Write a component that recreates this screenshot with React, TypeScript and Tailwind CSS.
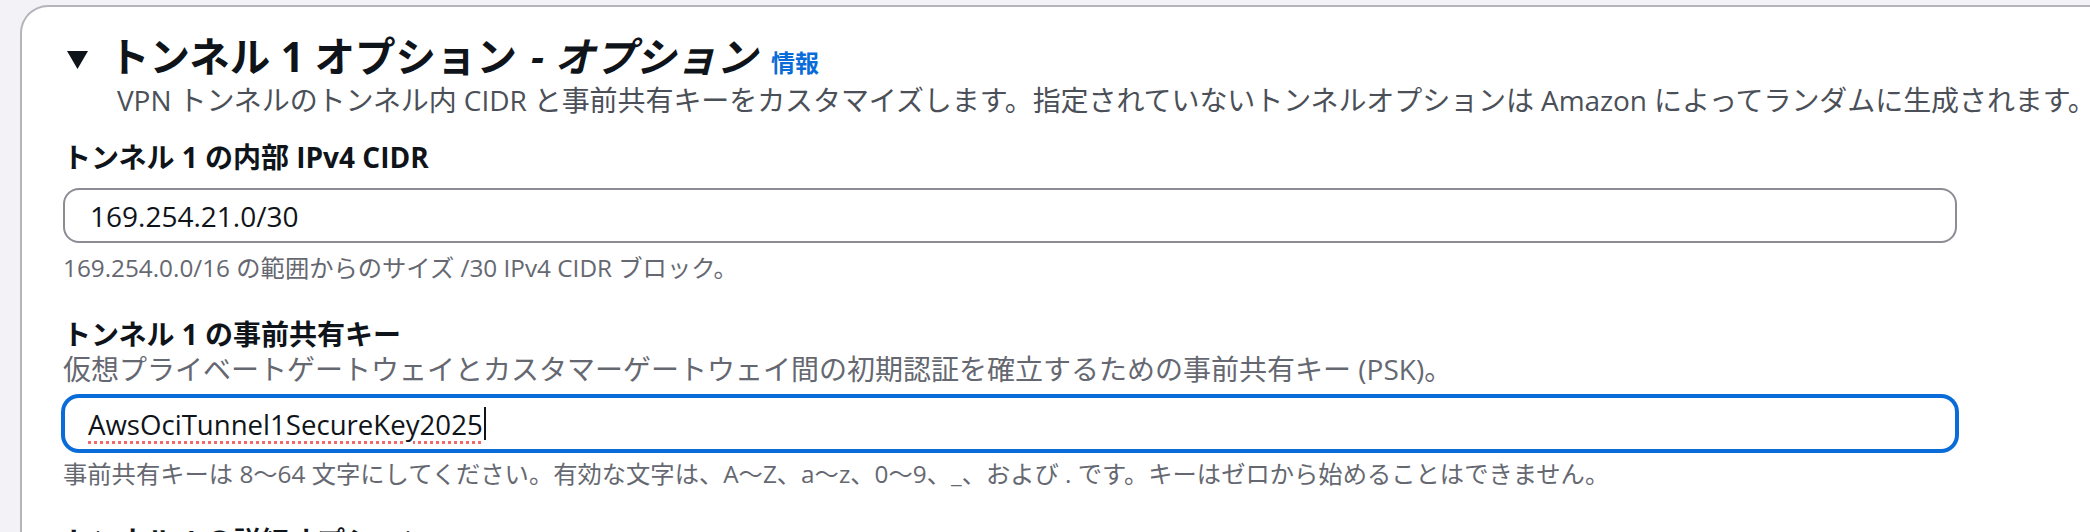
import React from "react";

const Caret = () => (
  <svg viewBox="0 0 21 18" className="ml-[4px] mr-[21px] h-[18px] w-[21px] shrink-0">
    <path d="M0 0h21L10.5 18z" fill="#0f141a" />
  </svg>
);

export default function App() {
  return (
    <div className="h-[532px] overflow-hidden bg-[#f3f3f7] pl-[20px] pt-[5px] font-['Open_Sans','Noto_Sans_CJK_JP',sans-serif]">
      <div className="h-[600px] rounded-tl-[28px] border-l-2 border-t-2 border-[#b4b4bb] bg-white pl-[41px] pt-[33px] text-[#0f141a]">
        {/* header */}
        <div className="flex h-[40px] items-center">
          <Caret />
          <h2 className="flex items-baseline whitespace-nowrap text-[40.5px] font-bold leading-[40px]">
            <span>トンネル 1 オプション</span>
            <span className="ml-[14px] italic">- オプション</span>
            <a className="ml-[14px] text-[24px] font-bold text-[#0a6cd8]">情報</a>
          </h2>
        </div>
        <p className="mt-[2px] whitespace-nowrap pl-[54px] text-[28px] leading-[36px] tracking-[-0.08px] text-[#4b5058]">
          VPN トンネルのトンネル内 CIDR と事前共有キーをカスタマイズします。指定されていないトンネルオプションは Amazon によってランダムに生成されます。
        </p>

        {/* inside cidr */}
        <label className="mt-[21px] block text-[28px] font-bold leading-[36px]">
          トンネル 1 の内部 IPv4 CIDR
        </label>
        <input
          readOnly
          value="169.254.21.0/30"
          className="mt-[13px] block h-[55px] w-[1894px] rounded-[16px] border-2 border-[#8c8c94] bg-white px-[25px] text-[28px] text-[#0f141a] outline-none"
        />
        <p className="mt-[9px] whitespace-nowrap text-[24.3px] leading-[32px] text-[#656871]">
          169.254.0.0/16 の範囲からのサイズ /30 IPv4 CIDR ブロック。
        </p>

        {/* pre-shared key */}
        <label className="mt-[32px] block text-[28px] font-bold leading-[36px]">
          トンネル 1 の事前共有キー
        </label>
        <p className="mt-[1px] whitespace-nowrap text-[28px] leading-[32px] text-[#656871]">
          仮想プライベートゲートウェイとカスタマーゲートウェイ間の初期認証を確立するための事前共有キー (PSK)。
        </p>
        <div className="mt-[11px] flex h-[55px] w-[1894px] items-center rounded-[16px] border-2 border-[#0a6cd8] bg-white px-[23px] shadow-[0_0_0_2px_#0a6cd8]">
          <span className="text-[27.6px] leading-[36px] text-[#0f141a] underline decoration-[#f06a6a] decoration-dotted decoration-[3px] underline-offset-[6px]">
            AwsOciTunnel1SecureKey2025
          </span>
          <span className="ml-[1px] h-[33px] w-[2px] bg-[#0f141a]" />
        </div>
        <p className="mt-[7px] whitespace-nowrap text-[24.3px] leading-[32px] text-[#656871]">
          事前共有キーは 8～64 文字にしてください。有効な文字は、A～Z、a～z、0～9、_、および . です。キーはゼロから始めることはできません。
        </p>

        {/* advanced, cut off */}
        <label className="mt-[33px] block text-[28px] font-bold leading-[36px]">
          トンネル 1 の詳細オプション
        </label>
      </div>
    </div>
  );
}
